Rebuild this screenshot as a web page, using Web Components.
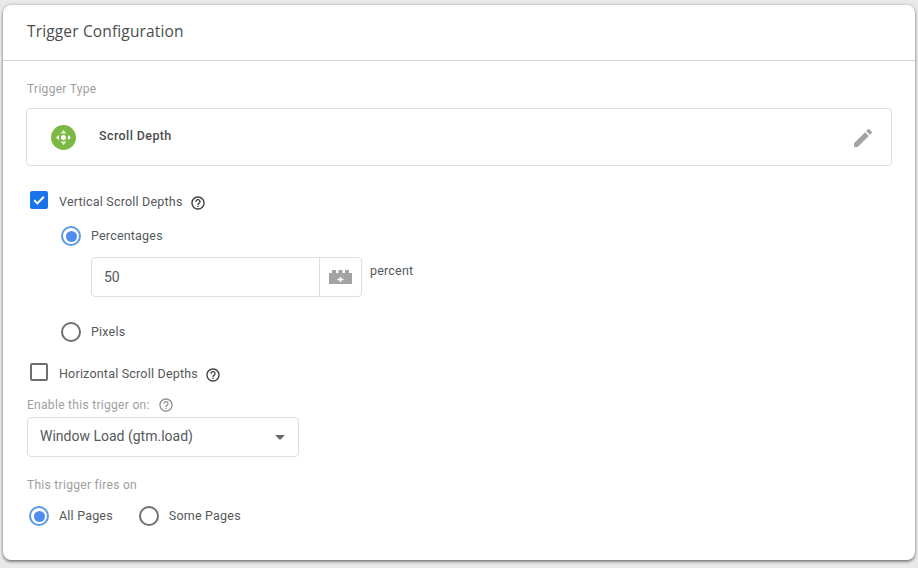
<!DOCTYPE html>
<html>
<head>
<meta charset="utf-8">
<title>Trigger Configuration</title>
<style>
  html, body { margin: 0; height: 568px; overflow: hidden; background: #e9e9e9; }
  body { padding: 5px 3px 0; box-sizing: border-box; font-family: Roboto, sans-serif; color: #3c4043; }
</style>
</head>
<body>
<trigger-card heading="Trigger Configuration">
  <field-label>Trigger Type</field-label>
  <type-row name="Scroll Depth"></type-row>

  <check-row checked style="margin-top:26px" help>Vertical Scroll Depths</check-row>
  <div style="margin:16px 0 0 35px">
    <radio-row checked>Percentages</radio-row>
    <number-input value="50" unit="percent" style="margin:11px 0 0 30px"></number-input>
    <radio-row style="margin-top:25px">Pixels</radio-row>
  </div>
  <check-row style="margin-top:22px" help>Horizontal Scroll Depths</check-row>

  <field-label help style="margin-top:16px">Enable this trigger on:</field-label>
  <select-box style="margin-top:5px">Window Load (gtm.load)</select-box>

  <field-label style="margin-top:21px">This trigger fires on</field-label>
  <div style="display:flex;gap:26px;margin:14px 0 0 3px">
    <radio-row checked>All Pages</radio-row>
    <radio-row>Some Pages</radio-row>
  </div>
</trigger-card>

<script>
const helpIcon = (color) => `
  <svg width="16" height="16" viewBox="0 0 24 24" fill="${color}">
    <path d="M11 18h2v-2h-2v2zm1-16C6.48 2 2 6.48 2 12s4.48 10 10 10 10-4.48 10-10S17.52 2 12 2zm0 18c-4.41 0-8-3.59-8-8s3.59-8 8-8 8 3.59 8 8-3.59 8-8 8zm0-14c-2.21 0-4 1.79-4 4h2c0-1.1.9-2 2-2s2 .9 2 2c0 2-3 1.75-3 5h2c0-2.25 3-2.5 3-5 0-2.21-1.79-4-4-4z"/>
  </svg>`;

class TriggerCard extends HTMLElement {
  constructor() {
    super();
    this.attachShadow({ mode: 'open' });
    this.shadowRoot.innerHTML = `
      <style>
        :host {
          display: block;
          width: 912px;
          height: 555px;
          background: #fff;
          border-radius: 8px;
          box-shadow: 0 2px 3px rgba(0,0,0,.4), 0 0 3px rgba(0,0,0,.25);
        }
        header {
          height: 56px;
          box-sizing: border-box;
          padding: 16px 24px 0;
          border-bottom: 1px solid #d6d6d6;
          font: 15.5px/21px "Open Sans", sans-serif;
          letter-spacing: .15px;
          color: #4a4d50;
        }
        .body { padding: 21px 23px 0 23px; }
      </style>
      <header></header>
      <div class="body"><slot></slot></div>
    `;
    this.shadowRoot.querySelector('header').textContent = this.getAttribute('heading');
  }
}

class FieldLabel extends HTMLElement {
  constructor() {
    super();
    this.attachShadow({ mode: 'open' });
    this.shadowRoot.innerHTML = `
      <style>
        :host {
          display: flex;
          align-items: center;
          gap: 8px;
          height: 14px;
          padding-left: 1px;
          font: 12px/14px Roboto, sans-serif;
          letter-spacing: .3px;
          color: #9e9e9e;
        }
        svg { display: block; }
      </style>
      <slot></slot>${this.hasAttribute('help') ? helpIcon('#8f8f8f') : ''}
    `;
  }
}

class TypeRow extends HTMLElement {
  constructor() {
    super();
    this.attachShadow({ mode: 'open' });
    this.shadowRoot.innerHTML = `
      <style>
        :host {
          display: flex;
          align-items: center;
          height: 58px;
          box-sizing: border-box;
          margin-top: 12px;
          padding: 0 16px 0 24px;
          border: 1px solid #dedede;
          border-radius: 4px;
        }
        .name { margin: -2px 0 0 23px; font: 500 12.5px/16px Roboto, sans-serif; letter-spacing: .4px; color: #4a4d50; flex: 1; }
        svg { display: block; }
      </style>
      <svg width="25" height="25" viewBox="0 0 25 25" style="margin-top:1px">
        <circle cx="12.5" cy="12.5" r="12.500" fill="#7cb944"/>
        <path d="M12.5 5l3 3.400h-6zM12.5 20l3-3.400h-6z" fill="#e4f2d6"/>
        <path d="M5 12.5l3-2.500v5zM20 12.5l-3-2.500v5z" fill="#fff"/>
        <circle cx="12.5" cy="12.5" r="2.500" fill="#fff"/>
      </svg>
      <span class="name"></span>
      <svg width="24" height="24" viewBox="0 0 24 24" fill="#a3a3a3" style="margin-top:1px">
        <path d="M3 17.25V21h3.75L17.81 9.94l-3.75-3.75L3 17.25zM20.71 7.04a1 1 0 0 0 0-1.41l-2.34-2.34a1 1 0 0 0-1.41 0l-1.83 1.83 3.75 3.75 1.83-1.83z"/>
      </svg>
    `;
    this.shadowRoot.querySelector('.name').textContent = this.getAttribute('name');
  }
}

class CheckRow extends HTMLElement {
  constructor() {
    super();
    this.attachShadow({ mode: 'open' });
    const on = this.hasAttribute('checked');
    this.shadowRoot.innerHTML = `
      <style>
        :host {
          display: flex;
          align-items: center;
          height: 18px;
          padding-left: 4px;
          font: 12.5px/18px Roboto, sans-serif;
          letter-spacing: .2px;
          color: #55585b;
        }
        .box {
          width: 18px;
          height: 18px;
          box-sizing: border-box;
          border-radius: 2px;
          margin: -2px 11px 0 0;
          border: 2px solid #6f6f6f;
        }
        .box.on { background: #1a73e8; border-color: #1a73e8; }
        .text { margin-top: 2px; }
        svg { display: block; }
        .help { margin: 3px 0 0 7px; }
      </style>
      <div class="box ${on ? 'on' : ''}">
        ${on ? '<svg width="14" height="14" viewBox="0 0 14 14"><path d="M2.2 7.2l3.2 3.2 6.4-6.6" fill="none" stroke="#fff" stroke-width="2"/></svg>' : ''}
      </div>
      <span class="text"><slot></slot></span>
      ${this.hasAttribute('help') ? `<span class="help">${helpIcon('#3a3a3a')}</span>` : ''}
    `;
  }
}

class RadioRow extends HTMLElement {
  constructor() {
    super();
    this.attachShadow({ mode: 'open' });
    const on = this.hasAttribute('checked');
    this.shadowRoot.innerHTML = `
      <style>
        :host {
          display: flex;
          align-items: center;
          height: 20px;
          font: 12.5px/20px Roboto, sans-serif;
          letter-spacing: .2px;
          color: #55585b;
        }
        .dot {
          width: 20px;
          height: 20px;
          box-sizing: border-box;
          margin-right: 10px;
          border-radius: 50%;
          border: 2px solid #6f6f6f;
          display: flex;
          align-items: center;
          justify-content: center;
        }
        .dot.on { border-color: #5f97e8; }
        .dot.on::after { content: ""; width: 11px; height: 11px; border-radius: 50%; background: #4f8ef0; }
      </style>
      <div class="dot ${on ? 'on' : ''}"></div>
      <slot></slot>
    `;
  }
}

class NumberInput extends HTMLElement {
  constructor() {
    super();
    this.attachShadow({ mode: 'open' });
    this.shadowRoot.innerHTML = `
      <style>
        :host { display: flex; align-items: flex-start; font: 13px/16px Roboto, sans-serif; color: #55585b; }
        .field {
          display: flex;
          width: 271px;
          height: 40px;
          box-sizing: border-box;
          border: 1px solid #dedede;
          border-radius: 4px;
        }
        .value { flex: 1; padding: 11px 0 0 12px; font-size: 14px; }
        .vars {
          width: 41px;
          border-left: 1px solid #dedede;
          display: flex;
          align-items: center;
          justify-content: center;
        }
        .unit { margin: 6px 0 0 8px; font-size: 12.5px; letter-spacing: .2px; }
        svg { display: block; }
      </style>
      <div class="field">
        <span class="value"></span>
        <div class="vars">
          <svg width="23" height="14" viewBox="0 0 23 14">
            <path d="M0 3h3V0h4v3h2.500V0h4v3H16V0h4v3h3v11H0z" fill="#a3a3a3"/>
            <path d="M11.500 7v5M8.500 9.500h6" stroke="#fff" stroke-width="1.500"/>
          </svg>
        </div>
      </div>
      <span class="unit"></span>
    `;
    this.shadowRoot.querySelector('.value').textContent = this.getAttribute('value');
    this.shadowRoot.querySelector('.unit').textContent = this.getAttribute('unit');
  }
}

class SelectBox extends HTMLElement {
  constructor() {
    super();
    this.attachShadow({ mode: 'open' });
    this.shadowRoot.innerHTML = `
      <style>
        :host {
          display: flex;
          align-items: center;
          justify-content: space-between;
          width: 272px;
          height: 40px;
          box-sizing: border-box;
          margin-left: 1px;
          padding: 0 13px 2px 12px;
          border: 1px solid #dedede;
          border-radius: 4px;
          font: 14px/18px Roboto, sans-serif;
          color: #55585b;
        }
        i { width: 0; height: 0; margin-top: 2px; border: 5px solid transparent; border-top-color: #6a6a6a; border-bottom: 0; }
      </style>
      <slot></slot><i></i>
    `;
  }
}

customElements.define('trigger-card', TriggerCard);
customElements.define('field-label', FieldLabel);
customElements.define('type-row', TypeRow);
customElements.define('check-row', CheckRow);
customElements.define('radio-row', RadioRow);
customElements.define('number-input', NumberInput);
customElements.define('select-box', SelectBox);
</script>
</body>
</html>
